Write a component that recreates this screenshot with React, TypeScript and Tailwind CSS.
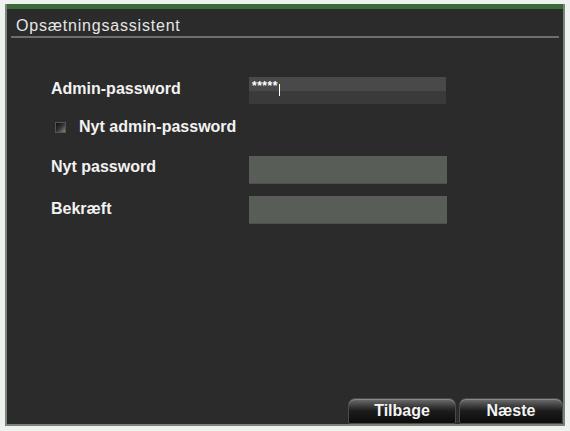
import React from 'react';

const font = { fontFamily: '"Liberation Sans", Arial, sans-serif' };

function Field({ children, variant }: { children?: React.ReactNode; variant: 'dark' | 'green' }) {
  if (variant === 'dark') {
    return (
      <div className="w-[197px] h-[27px] flex flex-col">
        <div className="h-[14px] bg-[#494949] flex items-end pl-[3px]">{children}</div>
        <div className="flex-1 bg-[#3a3a3a]" />
      </div>
    );
  }
  return <div className="w-[198px] h-[28px] bg-[#595d57] border-b border-[#4c504a]" />;
}

function Button({ label }: { label: string }) {
  return (
    <button className="w-full h-[26px] rounded-t-[7px] rounded-b-[2px] border border-[#4a4a4a] bg-gradient-to-b from-[#707070] via-[#1c1c1c] to-[#0c0c0c] text-[#f4f4f4] text-[16px] font-bold flex items-center justify-center shadow-[inset_0_1px_0_#8a8a8a]">
      {label}
    </button>
  );
}

export default function App() {
  return (
    <div style={font} className="w-[570px] h-[431px] bg-[#eef2ee] pl-[5px] pr-[5px] pt-[4px] pb-[5px]">
      <div className="w-full h-full bg-[#7a8478] pl-[2px] pr-[2px] pb-[2px]">
        <div className="w-full h-full border-t-[5px] border-[#3b6a38] bg-[#2b2b2b] flex flex-col">
          {/* Title */}
          <div className="h-[27px] pl-[9px] pt-[6px] flex items-center text-[#e6e6e6] text-[16px] tracking-[0.8px]">
            Opsætningsassistent
          </div>
          <div className="mx-[4px] h-[2px] bg-[#6e6e6e]" />

          {/* Form */}
          <div className="pl-[44px] pt-[39px] text-[#f2f2f2] text-[16px] font-bold">
            <div className="flex items-center h-[27px]">
              <span className="w-[198px] -translate-y-[2px]">Admin-password</span>
              <Field variant="dark">
                <span className="text-[12px] leading-[10px] text-white tracking-[0.5px]">*****</span>
                <span className="w-px h-[12px] bg-white ml-[1px] translate-y-[5px]" />
              </Field>
            </div>
            <div className="flex items-center h-[20px] mt-[13px] pl-[4px]">
              <span className="w-[11px] h-[11px] bg-gradient-to-br from-[#111] via-[#333] to-[#888] border border-[#555]" />
              <span className="ml-[13px]">Nyt admin-password</span>
            </div>
            <div className="flex items-center h-[28px] mt-[19px]">
              <span className="w-[198px] -translate-y-[3px]">Nyt password</span>
              <Field variant="green" />
            </div>
            <div className="flex items-center h-[27px] mt-[12px]">
              <span className="w-[198px] -translate-y-[1px]">Bekræft</span>
              <Field variant="green" />
            </div>
          </div>

          {/* Buttons */}
          <div className="mt-auto flex justify-end gap-[3px]">
            <div className="w-[108px]"><Button label="Tilbage" /></div>
            <div className="w-[104px]"><Button label="Næste" /></div>
          </div>
        </div>
      </div>
    </div>
  );
}
